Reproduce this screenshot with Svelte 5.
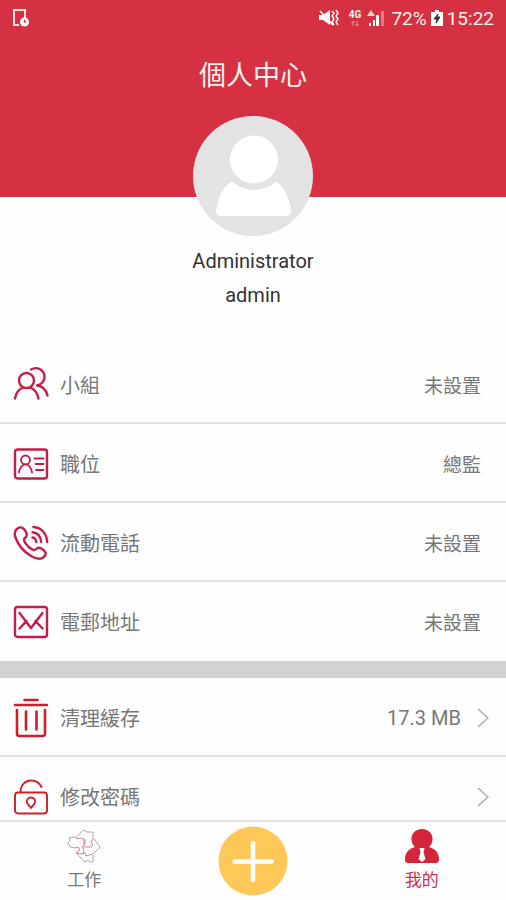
<script>
  const profile = [
    { icon: 'group', label: '小組', value: '未設置' },
    { icon: 'card', label: '職位', value: '總監' },
    { icon: 'phone', label: '流動電話', value: '未設置' },
    { icon: 'mail', label: '電郵地址', value: '未設置' }
  ];
  const settings = [
    { icon: 'trash', label: '清理緩存', value: '17.3 MB' },
    { icon: 'lock', label: '修改密碼', value: '' }
  ];
</script>

{#snippet rowIcon(name)}
  <svg class="row-icon" viewBox="0 0 36 40" aria-hidden="true">
    {#if name === 'group'}
      <circle cx="13.500" cy="15.500" r="7.500" />
      <path d="M2 33.500C3 28 6 24 10 22.500M17 22.500c4 1.500 7.500 5.500 8.500 11" />
      <path d="M18 4.500C24 1 31.500 5 31.500 12c0 4-2.500 7-7.500 8.500 5 .5 9 4 10.500 10" />
    {:else if name === 'card'}
      <rect x="2" y="5.500" width="32" height="29" rx="2.500" />
      <g stroke-width="1.800">
        <circle cx="12.500" cy="16" r="4.500" />
        <path d="M6 28.500c.5-4 2.500-6.500 5-8M14 20.500c2.500 1.500 4.500 4 5 8M21.500 14.500h9M22.500 20h8M23 26h7.500" />
      </g>
    {:else if name === 'phone'}
      <path d="M4.500 5.500C8 3 11 5 13 9c1.500 3 .8 4.500-.8 5.800-1.500 1.200-1.500 2.700 0 5 2 3 4 5 6.800 6.600 2 1 3.200.8 4.300-.4 1.500-1.600 3-1.800 5.500-.2 4 2.500 5.200 5.200 2.200 8-3 2.700-7.500 2.500-13-.8C10.500 28.500 5 21.500 2.500 14.500 1.300 11 1.700 7.500 4.500 5.500z" />
      <path d="M19.500 14.500c2.200.3 3.500 1.800 3.800 4.500M19.500 9.300c5 .5 8.200 4.200 8.700 9.700M20.500 4c8 .8 13 6.500 13.700 15" />
    {:else if name === 'mail'}
      <rect x="2" y="5" width="32" height="30" rx="2.500" />
      <path d="M6.500 11l11.500 15 11.500-15M6.500 26.500l7-7.500M29.500 26.500l-7-7.500" />
    {:else if name === 'trash'}
      <g class="vivid" stroke-width="2.600">
        <path d="M11.500 2h13M2 7h32" />
        <path d="M4 12v23.500c0 1.800 1 2.500 2.500 2.500h23c1.500 0 2.500-.7 2.500-2.500V12M13 13.500v18M23.500 13.500v18" />
      </g>
    {:else}
      <g class="vivid" stroke-width="1.900">
        <rect x="2" y="15.500" width="32" height="21" rx="3" />
        <path d="M7.500 15.500C7.500 7 13 3.500 18 3.500c5 0 8.500 2.500 10.500 6.500" />
        <path d="M18 31c-2-2.500-4.200-4.200-4.200-6.300a4.200 4.200 0 0 1 8.400 0c0 2.100-2.200 3.800-4.200 6.300z" />
      </g>
    {/if}
  </svg>
{/snippet}

<div class="app">
  <div class="status">
    <svg width="18" height="20" viewBox="0 0 18 20" aria-hidden="true">
      <path d="M7 17H2V2h11v9" fill="none" stroke="#ffe3dd" stroke-width="2" />
      <circle cx="12.500" cy="14" r="4.500" fill="#fff" />
      <path d="M12.500 11.500V14h2" fill="none" stroke="#d43243" stroke-width="1.200" />
    </svg>
    <div class="indicators">
      <svg width="20" height="18" viewBox="0 0 20 18" aria-hidden="true">
        <path d="M0 6h4l7-5v15l-7-5H0z" fill="#fff" />
        <path d="M1 2l13 14" stroke="#fff" stroke-width="1.500" />
        <path d="M13 2l2 2-2 3 2 3-2 3 2 3M17 1l2 3-2 3 2 3-2 3 2 3" fill="none" stroke="#fff" stroke-width="1.400" />
      </svg>
      <div class="network">
        <span>4G</span>
        <svg width="10" height="7" viewBox="0 0 10 7" aria-hidden="true"><path d="M3 6V1M1.500 3L3 1l1.500 2M7 1v5M5.500 4L7 6l1.500-2" fill="none" stroke="#eb9298" /></svg>
      </div>
      <svg width="18" height="18" viewBox="0 0 18 18" aria-hidden="true">
        <path d="M2 17v-3h2v3zM6 17v-6h2v6zM9 17V6h3v11z" fill="#fff" />
        <path d="M14 17V2h3v15z" fill="#e77b85" />
        <path d="M0 7l4-6 4 6z" fill="#f7d6bd" />
      </svg>
      <span class="battery-text">72%</span>
      <svg width="12" height="18" viewBox="0 0 12 18" aria-hidden="true">
        <path d="M4 1h4v2h4v14H0V3h4z" fill="#fff" />
        <path d="M7 5l-4 5h3l-1 4 4-6H6z" fill="#333" stroke="#333" />
      </svg>
      <span>15:22</span>
    </div>
  </div>

  <main>
    <header><h1>個人中心</h1></header>
    <section class="identity">
      <svg class="avatar" viewBox="0 0 120 120" role="img" aria-label="Administrator">
        <circle cx="60" cy="60" r="60" fill="#e3e3e3" />
        <circle cx="61" cy="43.500" r="24" fill="#fff" />
        <path d="M39 66q22 16 44 0c7 2 13 14 15 29q0 5-5 5H28q-5 0-5-5c2-15 9-27 16-29z" fill="#fff" />
      </svg>
      <p>Administrator</p>
      <p>admin</p>
    </section>

    <ul>
      {#each profile as item}
        <li class="row">
          {@render rowIcon(item.icon)}
          <span class="label">{item.label}</span>
          <span class="value">{item.value}</span>
        </li>
      {/each}
    </ul>
    <ul class="settings">
      {#each settings as item}
        <li>
          <button class="row">
            {@render rowIcon(item.icon)}
            <span class="label">{item.label}</span>
            <span class="value">{item.value}</span>
            <svg class="chevron" viewBox="0 0 12 20" aria-hidden="true"><path d="M1 1l10 9-10 9" /></svg>
          </button>
        </li>
      {/each}
    </ul>
  </main>

  <nav>
    <button class="tab">
      <svg width="36" height="36" viewBox="0 0 36 36" fill="none" aria-hidden="true">
        <path d="M10 9l8-7 3 2h6v7M28 11l6 8-7 7M27 27v7h-3l-2-2-3 2-9-9M9 20l-5-1-2-4 2-2-1-3 6-1" stroke="#aaa" />
        <path d="M9 9l2 2 3-1 4 1v7l-2 1 2 3-1 4M9 20l3-1 2 3-4 3M27 11l-2 3 2 3-2 2h-7M10 25l6 1 3-1 1 3 3-1 4-1M19 11v6" stroke="#d9808a" />
      </svg>
      <span>工作</span>
    </button>
    <button class="add" aria-label="新增">
      <svg width="70" height="70" viewBox="0 0 70 70" aria-hidden="true">
        <circle cx="35" cy="35" r="34.500" fill="#fdc858" />
        <path d="M35 17v37M16.500 35.500h37" stroke="#fff" stroke-width="4.500" stroke-linecap="round" />
      </svg>
    </button>
    <button class="tab active">
      <svg width="36" height="36" viewBox="0 0 36 36" aria-hidden="true">
        <path d="M18 1c7 0 11 5 10.500 11-.2 3-1.500 5-3.500 7 6 1.500 10 6 10 12 0 3-1 4-4 4H5c-3 0-4-1-4-4 0-6 4-10.500 10-12-2-2-3.300-4-3.500-7C7 6 11 1 18 1z" fill="#d42638" />
        <path d="M15.500 20h5l-1 4 2 7-3.500 3-3.500-3 2-7z" fill="#fff" />
      </svg>
      <span>我的</span>
    </button>
  </nav>
</div>

<style>
  :global(body) { margin: 0; background: #fefefe; }
  .app {
    display: flex;
    flex-direction: column;
    height: 100vh;
    font-family: Roboto, "Noto Sans CJK TC", sans-serif;
    color: #333;
  }
  .status {
    flex: none;
    display: flex;
    justify-content: space-between;
    align-items: center;
    height: 36px;
    padding: 0 12px;
    background: #d53142;
    color: #fff0ed;
    font-size: 19px;
  }
  .indicators { display: flex; align-items: center; gap: 4px; }
  .network {
    display: flex;
    flex-direction: column;
    align-items: center;
    margin: 0 2px 0 6px;
    font-size: 10px;
    font-weight: 700;
    line-height: 10px;
  }
  .battery-text { margin-left: 2px; }
  main { flex: 1; min-height: 0; overflow-y: auto; scrollbar-width: none; }
  header { height: 161px; background: #d53142; }
  h1 {
    margin: 0;
    padding-top: 20px;
    text-align: center;
    font-size: 27px;
    line-height: 40px;
    font-weight: 400;
    color: #fff0ed;
  }
  .identity {
    position: relative;
    display: flex;
    flex-direction: column;
    align-items: center;
    margin-top: -81px;
    padding-bottom: 33px;
  }
  .avatar { width: 120px; height: 120px; margin-bottom: 8px; }
  p { margin: 0; font-size: 20px; line-height: 34px; }
  ul { list-style: none; margin: 0; padding: 0; }
  .row {
    display: flex;
    align-items: center;
    box-sizing: border-box;
    width: 100%;
    height: 79px;
    padding: 2px 25px 0 13px;
    border: 0;
    border-bottom: 2px solid #e2e2e2;
    background: none;
    font: inherit;
    color: #777;
    text-align: left;
  }
  ul:first-of-type li:last-child { border-bottom-color: transparent; }
  .settings { border-top: 17px solid #d2d2d2; }
  .settings .row { padding-right: 17px; }
  .settings .value { font-size: 20px; }
  .row-icon {
    width: 36px;
    height: 40px;
    margin-right: 11px;
    fill: none;
    stroke: #c41d48;
    stroke-width: 2.4;
    stroke-linecap: round;
    stroke-linejoin: round;
  }
  .vivid { stroke: #cc2029; }
  .label { flex: 1; font-size: 20px; }
  .value { font-size: 19px; }
  .chevron {
    width: 12px;
    height: 20px;
    margin-left: 16px;
    fill: none;
    stroke: #aaa;
    stroke-width: 1.5;
  }
  nav {
    flex: none;
    display: grid;
    grid-template-columns: repeat(3, 1fr);
    justify-items: center;
    align-items: start;
    box-sizing: border-box;
    height: 80px;
    padding-top: 4px;
    border-top: 2px solid #e2e2e2;
    background: #fefefe;
  }
  nav button { padding: 0; border: 0; background: none; font: inherit; }
  nav svg { display: block; }
  nav .tab {
    display: flex;
    flex-direction: column;
    align-items: center;
    gap: 4px;
    padding-top: 2px;
    color: #777;
    font-size: 17px;
    line-height: 24px;
  }
  nav .active { color: #d22e4c; }
</style>
